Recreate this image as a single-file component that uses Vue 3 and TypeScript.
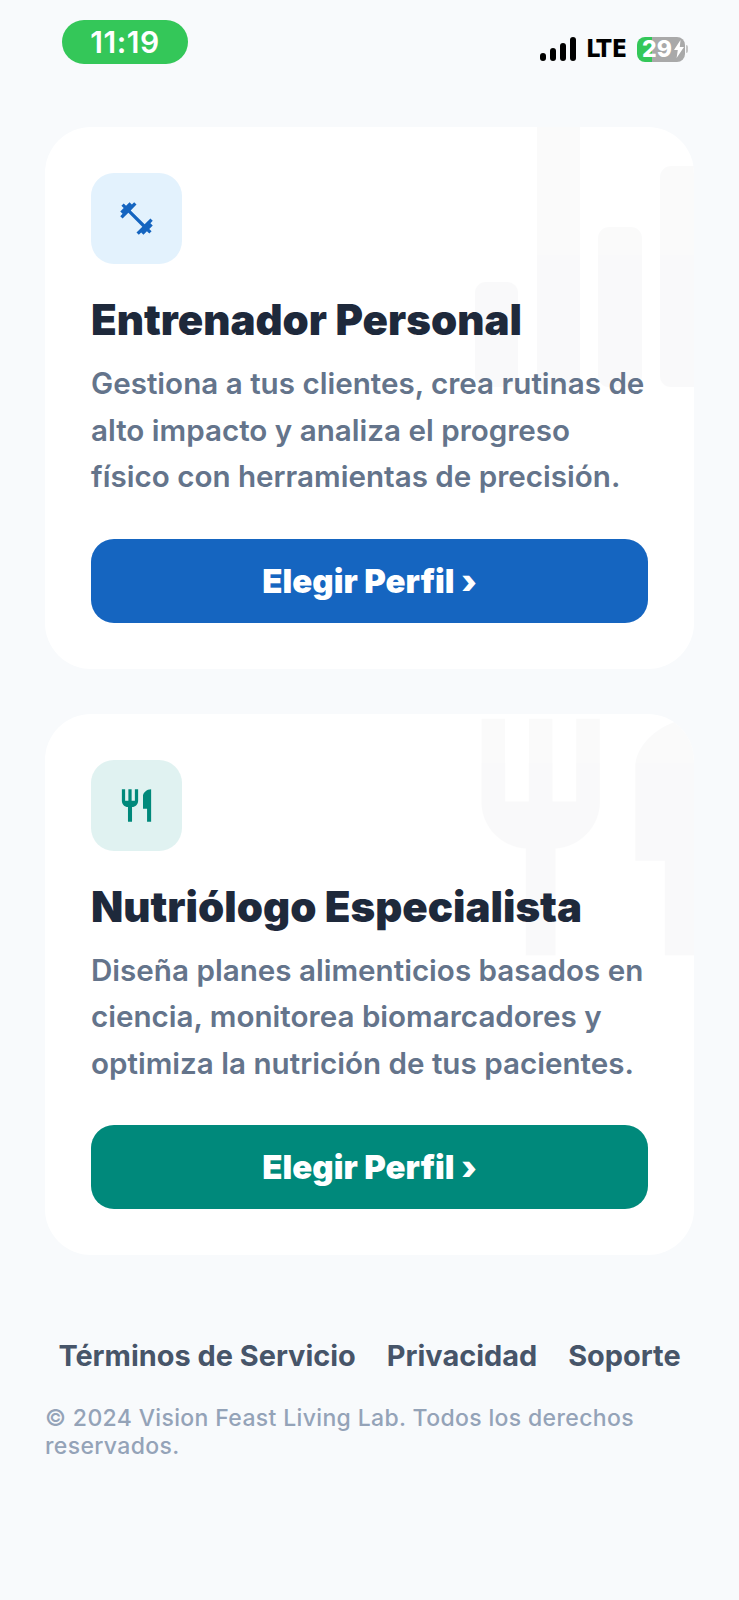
<template>
  <div class="page">
    <header class="status">
      <div class="clock">11:19</div>
      <div class="indicators">
        <div class="signal">
          <i v-for="h in signalBars" :key="h" :style="{ height: h + 'px' }"></i>
        </div>
        <span class="lte">LTE</span>
        <div class="battery">
          <span class="level">29</span>
          <svg class="bolt" viewBox="0 0 10 18"><path d="M6.5 0 0 10h3.8L2.6 18 10 7H5.8z" /></svg>
        </div>
        <div class="tip"></div>
      </div>
    </header>

    <main class="cards">
      <section v-for="p in profiles" :key="p.title" class="card" :class="p.kind">
        <svg v-if="p.kind === 'trainer'" class="decor bars" viewBox="0 0 230 270">
          <rect x="0" y="155" width="43" height="105" rx="11" />
          <rect x="62" y="-30" width="43" height="290" rx="11" />
          <rect x="123" y="100" width="44" height="160" rx="11" />
          <rect x="185" y="39" width="60" height="221" rx="11" />
        </svg>
        <svg v-else class="decor fork" viewBox="0 0 24 24"><path :d="restaurantPath" /></svg>

        <div class="icon-box">
          <svg viewBox="0 0 24 24"><path :d="p.kind === 'trainer' ? dumbbellPath : restaurantPath" /></svg>
        </div>
        <h2>{{ p.title }}</h2>
        <p>{{ p.text }}</p>
        <button type="button">Elegir Perfil ›</button>
      </section>
    </main>

    <footer class="foot">
      <nav>
        <a>Términos de Servicio</a>
        <a>Privacidad</a>
        <a>Soporte</a>
      </nav>
      <small>© 2024 Vision Feast Living Lab. Todos los derechos reservados.</small>
    </footer>
  </div>
</template>

<script setup lang="ts">
const signalBars: number[] = [8, 13, 18, 24]

const dumbbellPath =
  'M20.57 14.86L22 13.43 20.57 12 17 15.57 8.43 7 12 3.43 10.57 2 9.14 3.43 7.71 2 5.57 4.14 4.14 2.71 2.71 4.14l1.43 1.43L2 7.71l1.43 1.43L2 10.57 3.43 12 7 8.43 15.57 17 12 20.57 13.43 22l1.43-1.43L16.29 22l2.14-2.14 1.43 1.43 1.43-1.43-1.43-1.43L22 16.29z'
const restaurantPath =
  'M11 9H9V2H7v7H5V2H3v7c0 2.12 1.66 3.84 3.75 3.97V22h2.5v-9.03C11.34 12.84 13 11.12 13 9V2h-2v7zm5-3v8h2.5v8H21V2c-2.76 0-5 2.24-5 4z'

const profiles = [
  {
    kind: 'trainer',
    title: 'Entrenador Personal',
    text: 'Gestiona a tus clientes, crea rutinas de alto impacto y analiza el progreso físico con herramientas de precisión.'
  },
  {
    kind: 'nutrition',
    title: 'Nutriólogo Especialista',
    text: 'Diseña planes alimenticios basados en ciencia, monitorea biomarcadores y optimiza la nutrición de tus pacientes.'
  }
]
</script>

<style>
html,
body {
  background: #f8fafc;
}
</style>

<style scoped>
.page {
  width: 739px;
  height: 1600px;
  overflow: hidden;
  background: #f8fafc;
  font-family: Inter, "Liberation Sans", sans-serif;
  color: #1e293b;
}

.status {
  display: flex;
  justify-content: space-between;
  align-items: flex-start;
  height: 127px;
  padding: 20px 51px 0 62px;
  box-sizing: border-box;
}
.clock {
  width: 126px;
  height: 44px;
  border-radius: 22px;
  background: #34c759;
  color: #fff;
  font-size: 30px;
  font-weight: 600;
  letter-spacing: 0.5px;
  line-height: 44px;
  text-align: center;
}
.indicators {
  display: flex;
  align-items: center;
  margin-top: 16px;
}
.signal {
  display: flex;
  align-items: flex-end;
  gap: 4px;
  height: 24px;
  margin-right: 10px;
}
.signal i {
  display: block;
  width: 6px;
  border-radius: 3px;
  background: #000;
}
.lte {
  font-family: "DejaVu Sans Condensed", "Liberation Sans", sans-serif;
  font-size: 25px;
  font-weight: 700;
  line-height: 26px;
  color: #000;
  margin-right: 10px;
}
.battery {
  display: flex;
  align-items: center;
  width: 48px;
  height: 25px;
  padding-left: 5px;
  box-sizing: border-box;
  border-radius: 8px;
  background: linear-gradient(90deg, #34c759 15px, #a9a9a9 15px);
}
.level {
  color: #fff;
  font-size: 23px;
  font-weight: 800;
  line-height: 25px;
}
.bolt {
  width: 10px;
  height: 18px;
  margin-left: 2px;
  fill: #fff;
}
.tip {
  width: 2px;
  height: 8px;
  margin-left: 1px;
  border-radius: 0 2px 2px 0;
  background: #c4c4c4;
}

.cards {
  display: flex;
  flex-direction: column;
  gap: 45px;
  padding: 0 45px;
}
.card {
  position: relative;
  overflow: hidden;
  padding: 46px;
  border-radius: 46px;
  background: #fff;
}
.decor {
  position: absolute;
  fill: #0f172a;
  opacity: 0.02;
}
.bars {
  top: 0;
  right: -11px;
  width: 230px;
  height: 270px;
}
.fork {
  top: -19px;
  right: -36px;
  width: 284px;
  height: 284px;
}
.icon-box {
  position: relative;
  display: flex;
  align-items: center;
  justify-content: center;
  width: 91px;
  height: 91px;
  border-radius: 23px;
}
.icon-box svg {
  width: 39px;
  height: 39px;
}
.trainer .icon-box {
  background: #e3f2fd;
  fill: #1565c0;
}
.nutrition .icon-box {
  background: #e0f2f1;
  fill: #00897b;
}
h2 {
  position: relative;
  margin: 30px 0 15px;
  font-size: 42px;
  font-weight: 900;
  line-height: 51px;
  letter-spacing: 0;
  color: #1e293b;
}
p {
  position: relative;
  margin: 0 0 39px;
  font-size: 29.6px;
  font-weight: 600;
  line-height: 46.5px;
  color: #64748b;
}
button {
  position: relative;
  display: block;
  width: 100%;
  height: 84px;
  border: 0;
  border-radius: 23px;
  color: #fff;
  font-family: inherit;
  font-size: 33px;
  font-weight: 900;
}
.trainer button {
  background: #1565c0;
}
.nutrition button {
  background: #00897b;
}

.foot {
  padding: 84px 45px 0;
}
.foot nav {
  display: flex;
  justify-content: center;
  gap: 31px;
  white-space: nowrap;
}
.foot a {
  font-size: 28.9px;
  font-weight: 700;
  line-height: 34px;
  color: #475569;
}
.foot small {
  display: block;
  margin-top: 31px;
  font-size: 23px;
  font-weight: 500;
  line-height: 28px;
  letter-spacing: 0.35px;
  color: #94a3b8;
}
</style>
